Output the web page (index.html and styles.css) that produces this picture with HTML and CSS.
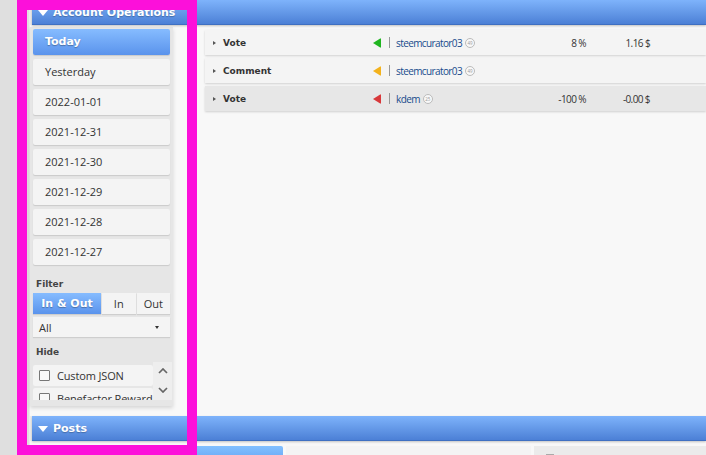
FILE: index.html
```html
<!DOCTYPE html>
<html lang="en">
<head>
<meta charset="utf-8">
<title>Account Operations</title>
<link rel="stylesheet" href="styles.css">
</head>
<body>
<div class="page">
  <section class="sec">
    <div class="sec-head"><span class="tri-down"></span>Account Operations</div>
    <div class="sec-body">
      <aside class="panel">
        <div class="days">
          <div class="btn active">Today</div>
          <div class="btn">Yesterday</div>
          <div class="btn">2022-01-01</div>
          <div class="btn">2021-12-31</div>
          <div class="btn">2021-12-30</div>
          <div class="btn">2021-12-29</div>
          <div class="btn">2021-12-28</div>
          <div class="btn">2021-12-27</div>
        </div>
        <div class="label label-filter">Filter</div>
        <div class="tabs">
          <div class="tab tab-wide active">In &amp; Out</div>
          <div class="tab">In</div>
          <div class="tab">Out</div>
        </div>
        <div class="select"><span>All</span><span class="caret-down"></span></div>
        <div class="label label-hide">Hide</div>
        <div class="hide-list">
          <div class="hide-items">
            <div class="hide-item"><span class="cb"></span>Custom JSON</div>
            <div class="hide-item"><span class="cb"></span>Benefactor Reward</div>
          </div>
          <div class="scroller">
            <svg class="chev" width="10" height="6" viewBox="0 0 10 6"><path d="M1 5 L5 1 L9 5" fill="none" stroke="#666" stroke-width="1.7"/></svg>
            <svg class="chev" width="10" height="6" viewBox="0 0 10 6"><path d="M1 1 L5 5 L9 1" fill="none" stroke="#666" stroke-width="1.7"/></svg>
          </div>
        </div>
      </aside>
      <main class="ops">
        <div class="op">
          <span class="caret-right"></span>
          <span class="op-type">Vote</span>
          <span class="dir dir-green"></span>
          <span class="sep"></span>
          <span class="user"><span class="user-name">steemcurator03</span><span class="rep">49</span></span>
          <span class="pct">8 %</span>
          <span class="amt">1.16 $</span>
        </div>
        <div class="op">
          <span class="caret-right"></span>
          <span class="op-type">Comment</span>
          <span class="dir dir-orange"></span>
          <span class="sep"></span>
          <span class="user"><span class="user-name">steemcurator03</span><span class="rep">49</span></span>
          <span class="pct"></span>
          <span class="amt"></span>
        </div>
        <div class="op op-hover">
          <span class="caret-right"></span>
          <span class="op-type">Vote</span>
          <span class="dir dir-red"></span>
          <span class="sep"></span>
          <span class="user"><span class="user-name">kdem</span><span class="rep">25</span></span>
          <span class="pct">-100 %</span>
          <span class="amt">-0.00 $</span>
        </div>
      </main>
    </div>
  </section>
  <section class="sec">
    <div class="sec-head"><span class="tri-down"></span>Posts</div>
    <div class="posts-body">
      <div class="posts-side"></div>
      <div class="posts-card">Global Index</div>
      <div class="posts-meta"><span class="meta-sq"></span>Search</div>
    </div>
  </section>
</div>
<div class="highlight"></div>
</body>
</html>
```
FILE: styles.css
```css
html, body {
  margin: 0;
  padding: 0;
}
body {
  width: 706px;
  height: 455px;
  overflow: hidden;
  background: #dfdfdf;
  font-family: "Open Sans", "DejaVu Sans", sans-serif;
  color: #333;
  position: relative;
}
.page {
  margin-left: 29px;
  padding-left: 1px;
  background: #ebebeb;
  height: 455px;
}
.sec-head {
  margin-left: 2px;
  height: 24px;
  border-bottom: 1px solid #3f70c2;
  background: linear-gradient(#7eb3fb, #4c80d6);
  box-shadow: 0 1px 2px rgba(0, 0, 0, 0.22);
  display: flex;
  align-items: center;
  padding-left: 6px;
  font-family: "DejaVu Sans", sans-serif;
  font-weight: bold;
  font-size: 11px;
  color: #fff;
  text-shadow: 0 1px 1px rgba(0, 0, 0, 0.25);
  position: relative;
  z-index: 1;
}
.tri-down {
  width: 0;
  height: 0;
  border-left: 5px solid transparent;
  border-right: 5px solid transparent;
  border-top: 6px solid #fff;
  margin-right: 5px;
  margin-top: 1px;
}
.sec-body {
  display: flex;
  align-items: flex-start;
  height: 391px;
  background: #f8f8f8;
}
.panel {
  width: 137px;
  margin-top: 2px;
  padding: 2px 3px 6px 3px;
  background: #e6e6e6;
  box-shadow: 0 2px 4px rgba(0, 0, 0, 0.14);
  flex: 0 0 auto;
}
.days {
  display: flex;
  flex-direction: column;
  gap: 4px;
}
.btn {
  height: 26px;
  line-height: 26px;
  padding-left: 12px;
  background: #f4f4f4;
  border-radius: 2px;
  box-shadow: 0 1px 1px rgba(0, 0, 0, 0.12);
  font-size: 11px;
  color: #333;
}
.btn.active {
  background: linear-gradient(#86bcff, #5a93ec);
  color: #fff;
  font-family: "DejaVu Sans", sans-serif;
  font-weight: bold;
  text-shadow: 0 1px 1px rgba(0, 0, 0, 0.3);
}
.label {
  font-family: "DejaVu Sans", sans-serif;
  font-weight: bold;
  font-size: 9px;
  line-height: 12px;
  height: 12px;
  color: #444;
  padding-left: 3px;
}
.label-filter {
  margin: 13px 0 3px;
}
.label-hide {
  margin: 9px 0 4px;
}
.tabs {
  display: flex;
  height: 21px;
  gap: 1px;
  margin-bottom: 3px;
}
.tab {
  flex: 1 1 0;
  background: #f4f4f4;
  font-size: 11px;
  line-height: 21px;
  text-align: center;
  color: #333;
  box-shadow: 0 1px 1px rgba(0, 0, 0, 0.1);
}
.tab.tab-wide {
  flex: 0 0 68px;
}
.tab.active {
  background: linear-gradient(#86bcff, #5a93ec);
  color: #fff;
  font-family: "DejaVu Sans", sans-serif;
  font-weight: bold;
  text-shadow: 0 1px 1px rgba(0, 0, 0, 0.3);
}
.select {
  height: 20px;
  background: #f4f4f4;
  box-shadow: 0 1px 1px rgba(0, 0, 0, 0.1);
  display: flex;
  align-items: center;
  justify-content: space-between;
  padding: 0 11px 0 6px;
  font-size: 11px;
  color: #333;
}
.caret-down {
  width: 0;
  height: 0;
  border-left: 2px solid transparent;
  border-right: 2px solid transparent;
  border-top: 3px solid #333;
}
.hide-list {
  display: flex;
  height: 38px;
  margin-right: -3px;
}
.hide-items {
  flex: 0 0 120px;
  height: 35px;
  padding-top: 3px;
  overflow: hidden;
}
.hide-item {
  height: 21px;
  margin-bottom: 2px;
  background: #f4f4f4;
  display: flex;
  align-items: center;
  padding-left: 6px;
  font-size: 11px;
  letter-spacing: -0.15px;
  color: #333;
  white-space: nowrap;
  border-radius: 2px;
}
.cb {
  width: 9px;
  height: 9px;
  border: 1px solid #777;
  border-radius: 1px;
  background: #f8f8f8;
  margin-right: 7px;
  flex: 0 0 auto;
}
.scroller {
  flex: 0 0 19px;
  background: #eeeeee;
  display: flex;
  flex-direction: column;
  align-items: center;
  justify-content: space-between;
  padding: 6px 0 7px;
  box-sizing: border-box;
  height: 38px;
}
.chev {
  display: block;
}
.ops {
  flex: 1;
  padding: 5px 0 0 32px;
  display: flex;
  flex-direction: column;
  gap: 3px;
}
.op {
  height: 25px;
  background: #f4f4f4;
  box-shadow: 0 1px 2px rgba(0, 0, 0, 0.16);
  display: grid;
  grid-template-columns: 10px 150px 16px 7px 150px 40px 64px;
  align-items: center;
  padding-left: 8px;
}
.op.op-hover {
  background: #e7e7e7;
}
.caret-right {
  width: 0;
  height: 0;
  border-top: 2.5px solid transparent;
  border-bottom: 2.5px solid transparent;
  border-left: 3px solid #555;
}
.op-type {
  font-family: "DejaVu Sans", sans-serif;
  font-weight: bold;
  font-size: 9px;
  color: #333;
}
.dir {
  width: 0;
  height: 0;
  border-top: 5px solid transparent;
  border-bottom: 5px solid transparent;
  border-right: 8px solid #22b322;
  border-radius: 1px;
}
.dir-green { border-right-color: #20b520; }
.dir-orange { border-right-color: #f3b21c; }
.dir-red { border-right-color: #d8383a; }
.sep {
  width: 1px;
  height: 11px;
  background: #999;
}
.user {
  display: flex;
  align-items: center;
  font-size: 10px;
  letter-spacing: -0.6px;
  color: #174b8c;
}
.rep {
  width: 8px;
  height: 8px;
  border: 1px solid #bbb;
  border-radius: 50%;
  margin-left: 3px;
  font-size: 4.5px;
  letter-spacing: 0;
  line-height: 8px;
  text-align: center;
  color: #999;
  background: #f8f8f8;
}
.pct, .amt {
  text-align: right;
  font-size: 10px;
  letter-spacing: -0.6px;
  color: #333;
}
.posts-body {
  display: flex;
  padding-top: 5px;
  background: #f8f8f8;
  height: 14px;
  gap: 3px;
}
.posts-side {
  width: 250px;
  margin-left: 3px;
  background: linear-gradient(#82c0ff, #6aa8f5);
  border-radius: 2px 2px 0 0;
}
.posts-card {
  width: 233px;
  background: #f4f4f4;
  padding: 6px 0 0 12px;
  font-size: 11px;
  color: #333;
  line-height: 14px;
}
.posts-meta {
  flex: 1;
  background: #ebebeb;
  padding: 6px 0 0 12px;
  font-size: 11px;
  color: #777;
  display: flex;
  align-items: flex-start;
  line-height: 14px;
}
.meta-sq {
  width: 8px;
  height: 8px;
  background: #aaa;
  margin: 2px 4px 0 0;
}
.highlight {
  position: absolute;
  left: 17px;
  top: 0;
  width: 160px;
  height: 435px;
  border: 10px solid #fc10da;
  z-index: 5;
}
```
